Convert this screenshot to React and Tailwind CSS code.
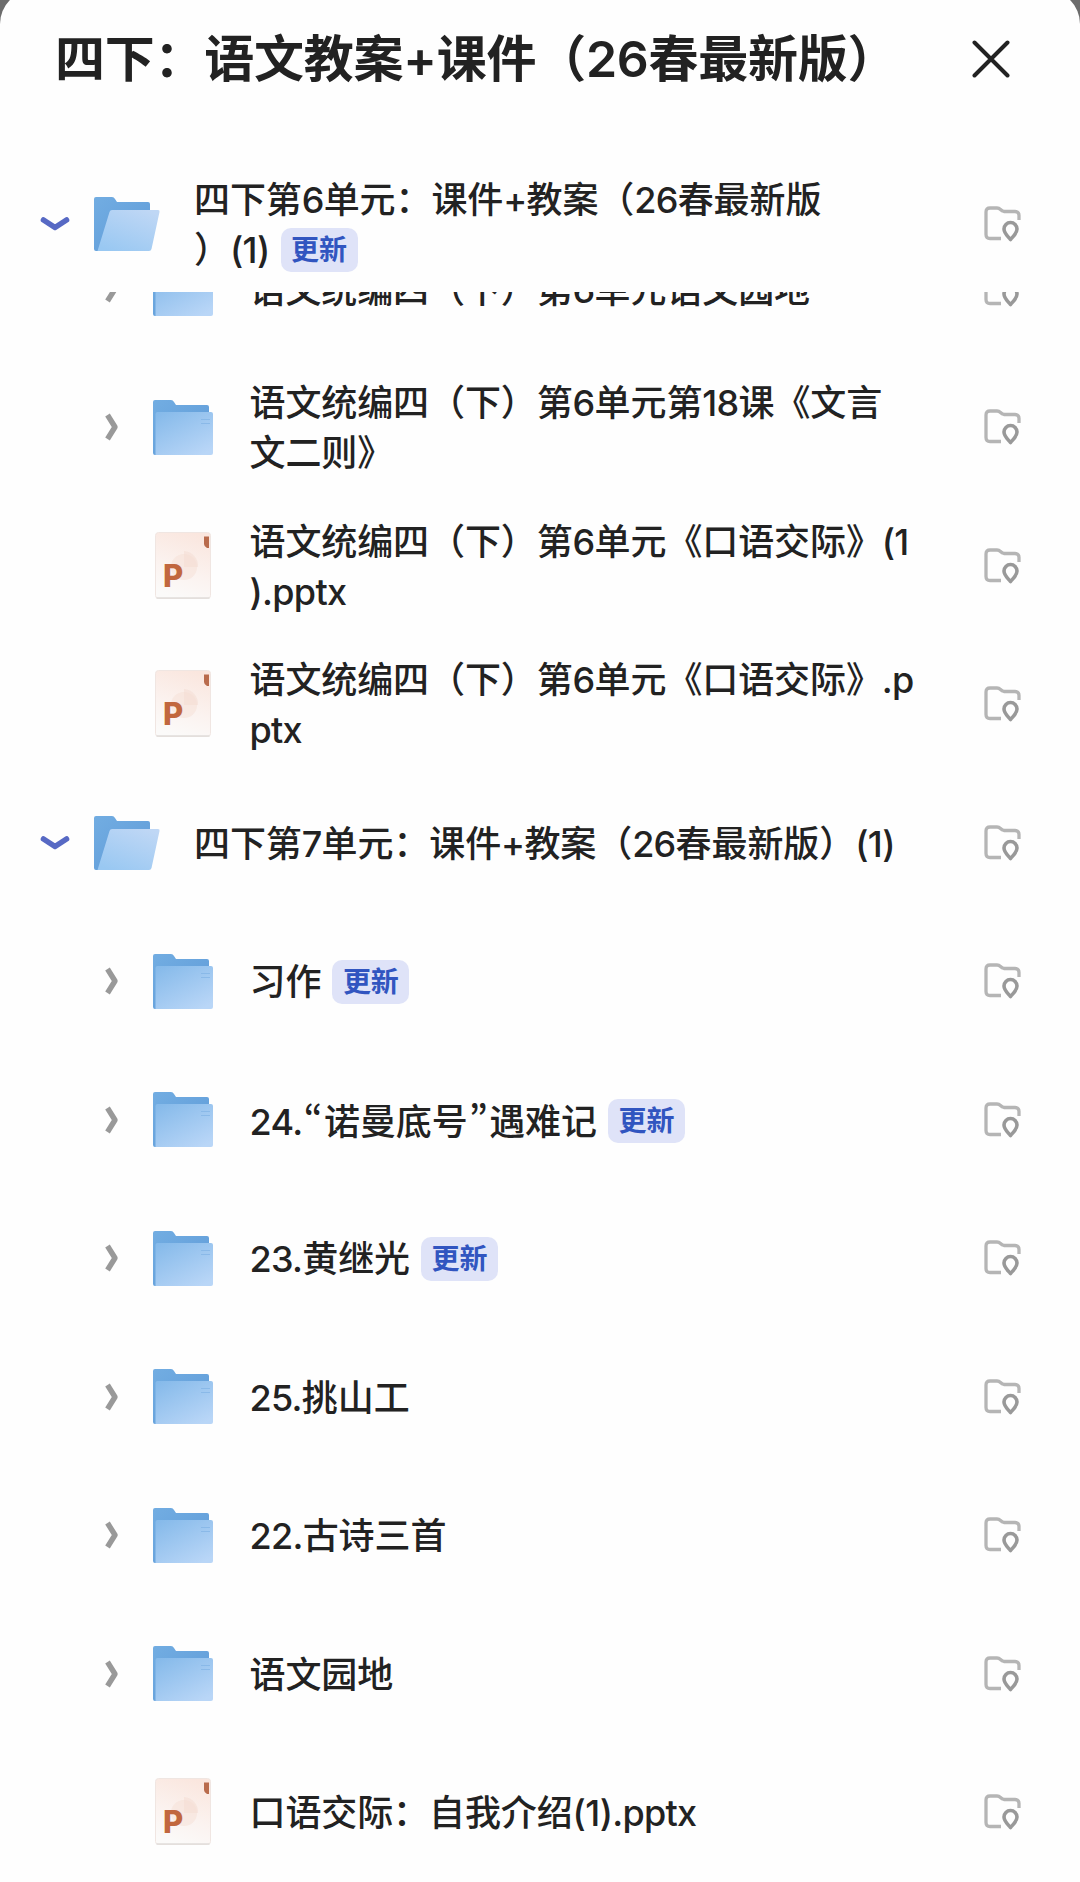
const UNIT_6 = [
  { type: "folder", lines: ["语文统编四（下）第6单元语文园地"] },
  { type: "folder", lines: ["语文统编四（下）第6单元第18课《文言", "文二则》"] },
  { type: "ppt", lines: ["语文统编四（下）第6单元《口语交际》(1", ").pptx"] },
  { type: "ppt", lines: ["语文统编四（下）第6单元《口语交际》.p", "ptx"] },
];

const UNIT_7 = [
  { type: "folder", lines: ["习作"], updated: true },
  { type: "folder", lines: ["24.“诺曼底号”遇难记"], updated: true },
  { type: "folder", lines: ["23.黄继光"], updated: true },
  { type: "folder", lines: ["25.挑山工"] },
  { type: "folder", lines: ["22.古诗三首"] },
  { type: "folder", lines: ["语文园地"] },
  { type: "ppt", lines: ["口语交际：自我介绍(1).pptx"] },
];

export default function App() {
  return (
    <div className="h-[1882px] w-[1080px] overflow-hidden bg-[#6c6c6c] font-['Inter','Noto_Sans_CJK_SC',sans-serif] text-[#222]">
      <Gradients />
      <div className="-mt-[10px] flex h-[1892px] flex-col rounded-t-[34px] bg-[#fefefe]">
        <header className="flex h-[138px] shrink-0 items-center justify-between pr-[70px] pl-[55px]">
          <h1 className="text-[50px] leading-none font-semibold tracking-[-0.25px] whitespace-nowrap">
            四下：语文教案+课件（26春最新版）
          </h1>
          <CloseIcon />
        </header>

        <div className="flex h-[164px] shrink-0 items-center pt-[27px]">
          <GroupRow lines={["四下第6单元：课件+教案（26春最新版", "）(1)"]} updated />
        </div>

        <div className="min-h-0 flex-1 overflow-hidden">
          <div className="-mt-[72.5px]">
            {UNIT_6.map((item, i) => (
              <ItemRow key={i} {...item} />
            ))}
            <GroupRow lines={["四下第7单元：课件+教案（26春最新版）(1)"]} />
            {UNIT_7.map((item, i) => (
              <ItemRow key={i} {...item} />
            ))}
          </div>
        </div>
      </div>
    </div>
  );
}

function GroupRow({ lines, updated }) {
  return (
    <div className="flex h-[138.5px] w-full items-center pr-[59px] pl-[40px]">
      <ChevronDown />
      <OpenFolder />
      <Name lines={lines} updated={updated} className="ml-[34px]" />
      <LocateIcon />
    </div>
  );
}

function ItemRow({ type, lines, updated }) {
  return (
    <div className="flex h-[138.5px] w-full items-center pr-[59px] pl-[104px]">
      <div className="w-[48px] shrink-0">{type === "folder" && <ChevronRight />}</div>
      {type === "folder" ? <Folder /> : <PptIcon />}
      <Name lines={lines} updated={updated} className="ml-[35.5px]" />
      <LocateIcon />
    </div>
  );
}

function Name({ lines, updated, className }) {
  return (
    <div
      className={`flex-1 pt-[2px] text-[36px] leading-[50px] font-[450] tracking-[-0.1px] whitespace-nowrap ${className}`}
    >
      {lines.map((line, i) => (
        <div key={line} className="flex h-[50px] items-center">
          <span>{mixedText(line)}</span>
          {updated && i === lines.length - 1 && <Badge />}
        </div>
      ))}
    </div>
  );
}

// Latin runs are set a bit tighter; curly quotes take the round CJK shapes
function mixedText(line) {
  return line.split(/([“”]|[\x21-\x7e]+)/).map((part, i) => {
    if (part === "“" || part === "”") {
      return (
        <span
          key={i}
          lang="zh-CN"
          className="mx-[1.5px] font-['Noto_Sans_CJK_SC',sans-serif] [font-feature-settings:'pwid']"
        >
          {part}
        </span>
      );
    }
    if (/^[\x21-\x7e]/.test(part)) {
      return (
        <span key={i} className="tracking-[-0.7px]">
          {part}
        </span>
      );
    }
    return part;
  });
}

function Badge() {
  return (
    <span className="ml-[11px] flex h-[44px] w-[77px] items-center justify-center rounded-[10px] bg-[#dfe3f8] text-[28px] leading-none font-bold text-[#3155c0]">
      更新
    </span>
  );
}

function Gradients() {
  return (
    <svg className="absolute h-0 w-0" aria-hidden="true">
      <defs>
        <linearGradient id="folderBack" x1="0" y1="0" x2="1" y2="1">
          <stop offset="0" stopColor="#72ade2" />
          <stop offset="1" stopColor="#5f9bd8" />
        </linearGradient>
        <linearGradient id="folderFront" x1="0.1" y1="0" x2="0.8" y2="1">
          <stop offset="0" stopColor="#86baea" />
          <stop offset="1" stopColor="#b9d6f7" />
        </linearGradient>
        <linearGradient id="openFront" x1="0.2" y1="1" x2="0.8" y2="0">
          <stop offset="0" stopColor="#99c8f2" />
          <stop offset="1" stopColor="#bfd7f5" />
        </linearGradient>
        <linearGradient id="pptSheet" x1="0.7" y1="0" x2="0.4" y2="1">
          <stop offset="0" stopColor="#fae6de" />
          <stop offset="0.6" stopColor="#fbf3f0" />
          <stop offset="1" stopColor="#fbfaf9" />
        </linearGradient>
      </defs>
    </svg>
  );
}

function CloseIcon() {
  return (
    <svg className="h-[38px] w-[38px]" viewBox="0 0 38 38" fill="none">
      <path d="M2.500 2.500l33 33M35.500 2.500l-33 33" stroke="#222" strokeWidth="4" strokeLinecap="round" />
    </svg>
  );
}

function ChevronDown() {
  return (
    <svg className="h-[18px] w-[30px] shrink-0" viewBox="0 0 30 18" fill="none">
      <path d="M3.500 5L15 12.500l11.500-7.500" stroke="#5769c4" strokeWidth="5.600" strokeLinecap="round" strokeLinejoin="round" />
    </svg>
  );
}

function ChevronRight() {
  return (
    <svg className="h-[28px] w-[16px]" viewBox="0 0 16 28" fill="none">
      <path d="M3.500 2l7.500 12-7.500 12" stroke="#999" strokeWidth="5.400" strokeLinejoin="round" />
    </svg>
  );
}

function OpenFolder() {
  return (
    <svg className="ml-[23px] h-[56px] w-[67px] shrink-0" viewBox="0 0 67 56">
      <path d="M1 3q0-2 2-2h16q2 0 3 2l2 3h31q2 0 2 2v30L6 55H3q-2 0-2-2z" fill="url(#folderBack)" />
      <path d="M16.500 16q.6-2 2.500-2h46q2 0 1.500 2l-8 37q-.5 2-2.500 2H4.500z" fill="url(#openFront)" />
    </svg>
  );
}

function Folder() {
  return (
    <svg className="h-[57px] w-[62px] shrink-0" viewBox="0 0 62 57">
      <path d="M1 3q0-2 2-2h16q2 0 3 2l2 3h31q2 0 2 2v48H3q-2 0-2-2z" fill="url(#folderBack)" />
      <path d="M3.500 15q0-2 2-2H59q2 0 2 2v39q0 2-2 2H3.500z" fill="url(#folderFront)" />
      <path d="M49 20.500h9M49 24.500h9" stroke="#84b5e6" strokeWidth="0.8" />
    </svg>
  );
}

function PptIcon() {
  return (
    <svg className="h-[68px] w-[62px] shrink-0" viewBox="0 0 62 68">
      <rect x="3.500" y="0.500" width="55" height="66" rx="3" fill="url(#pptSheet)" stroke="#f0e6e2" strokeWidth="1" />
      <path d="M4.500 66h53" stroke="#e0dcda" strokeWidth="1.500" />
      <circle cx="32" cy="35" r="13" fill="#f6e0d6" opacity="0.5" />
      <path d="M32 19v16h14a15 15 0 0 0-14-16z" fill="#f4dcd1" opacity="0.5" />
      <path d="M52 4.500h5V16h-2q-3-1.500-3-4z" fill="#b96b4c" />
      <text x="11" y="54.500" className="font-['Inter',sans-serif] text-[31px] font-extrabold" fill="#c1673e">
        P
      </text>
    </svg>
  );
}

function LocateIcon() {
  return (
    <svg className="h-[36px] w-[38px] shrink-0" viewBox="0 0 38 36" fill="none">
      <path
        d="M18 32.500H7q-4 0-4-4V6q0-4 4-4h7q2 0 3.500 1.500T21 5.500h11q4 0 4 4V14"
        stroke="#b5b5b5"
        strokeWidth="3.300"
      />
      <path
        d="M27.500 33.500c-3.500-4-6.500-6.500-6.500-10.500a6.500 6.500 0 0 1 13 0c0 4-3 6.500-6.500 10.500z"
        stroke="#999"
        strokeWidth="3.600"
        strokeLinejoin="round"
      />
    </svg>
  );
}
